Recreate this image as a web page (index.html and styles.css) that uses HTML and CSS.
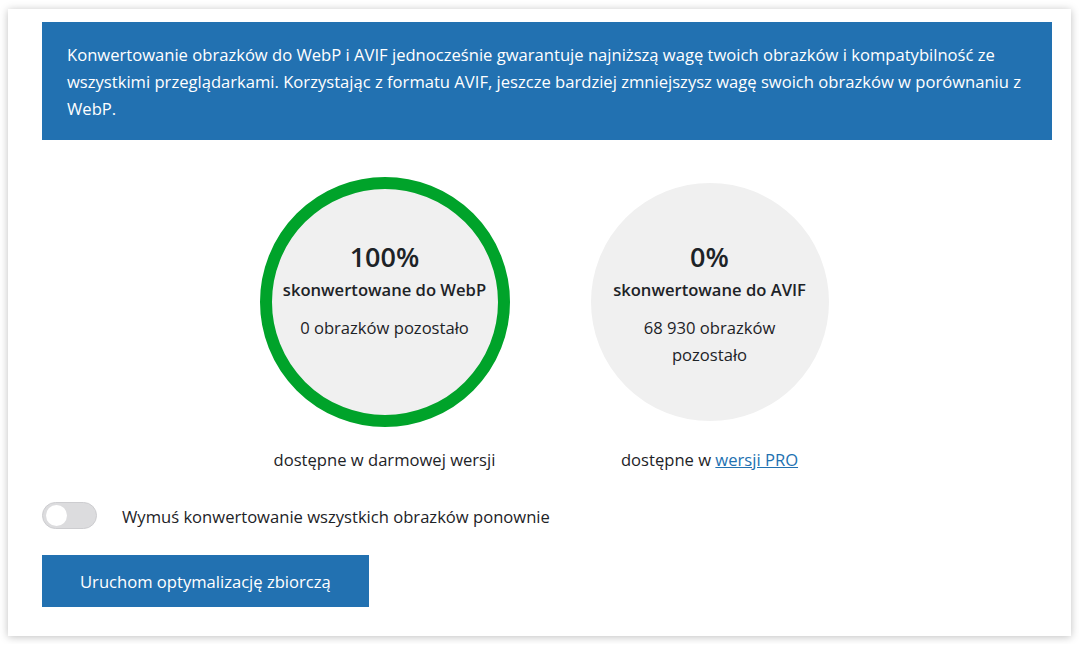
FILE: index.html
```html
<!DOCTYPE html>
<html lang="pl">

<head>
  <meta charset="UTF-8">
  <meta name="viewport" content="width=device-width, initial-scale=1.0">
  <title>Optymalizacja zbiorcza</title>
  <link rel="stylesheet" href="styles.css">
</head>

<body>
  <div class="card">
    <div class="notice">
      Konwertowanie obrazków do WebP i AVIF jednocześnie gwarantuje najniższą wagę twoich obrazków i kompatybilność ze
      wszystkimi przeglądarkami. Korzystając z formatu AVIF, jeszcze bardziej zmniejszysz wagę swoich obrazków w porównaniu z
      WebP.
    </div>

    <div class="stats">
      <div class="stat">
        <div class="stat-circle stat-circle--done">
          <div class="stat-percent">100%</div>
          <div class="stat-title">skonwertowane do WebP</div>
          <div class="stat-remaining">0 obrazków pozostało</div>
        </div>
        <p class="stat-note">dostępne w darmowej wersji</p>
      </div>

      <div class="stat">
        <div class="stat-circle stat-circle--empty">
          <div class="stat-percent">0%</div>
          <div class="stat-title">skonwertowane do AVIF</div>
          <div class="stat-remaining">68 930 obrazków pozostało</div>
        </div>
        <p class="stat-note">dostępne w <a href="#">wersji PRO</a></p>
      </div>
    </div>

    <label class="option">
      <span class="toggle"><span class="toggle-knob"></span></span>
      <span class="option-label">Wymuś konwertowanie wszystkich obrazków ponownie</span>
    </label>

    <button class="btn-primary">Uruchom optymalizację zbiorczą</button>
  </div>
</body>

</html>
```

FILE: styles.css
```css
body {
  margin: 0;
  padding: 9px 8px 8px;
  background-color: #fff;
  font-family: 'Open Sans', sans-serif;
  font-size: 16.6px;
  color: #1d2327;
}

.card {
  background-color: #fff;
  box-shadow: 0 1px 8px rgba(0, 0, 0, 0.25);
  padding: 13px 19px 29px 34px;
}

.notice {
  background-color: #2271b1;
  color: #fff;
  line-height: 27px;
  padding: 19px 18px 18px 25px;
}

.stats {
  display: flex;
  justify-content: center;
  gap: 75px;
  margin-top: 37px;
}

.stat {
  width: 250px;
  text-align: center;
}

.stat-circle {
  box-sizing: border-box;
  width: 250px;
  height: 250px;
  border-radius: 50%;
  background-color: #f0f0f0;
  border: 12px solid #00a32a;
  padding-top: 49px;
}

.stat-circle--empty {
  border: 6px solid #fff;
  padding-top: 55px;
}

.stat-percent {
  font-size: 27px;
  font-weight: 600;
  line-height: 38px;
}

.stat-title {
  font-weight: 600;
  line-height: 27px;
  margin-bottom: 11px;
}

.stat-remaining {
  line-height: 27px;
  max-width: 185px;
  margin: 0 auto;
}

.stat-note {
  line-height: 27px;
  margin: 19px 0 0;
}

.stat-note a {
  color: #2271b1;
}

.option {
  display: flex;
  align-items: center;
  gap: 25px;
  margin-top: 29px;
}

.option-label {
  padding-top: 2px;
}

.toggle {
  position: relative;
  box-sizing: border-box;
  width: 55px;
  height: 27px;
  border-radius: 14px;
  border: 1px solid #cdcdd0;
  background-color: #dcdcde;
}

.toggle-knob {
  position: absolute;
  top: 2px;
  left: 3px;
  width: 21px;
  height: 21px;
  border-radius: 50%;
  background-color: #fff;
}

.btn-primary {
  display: block;
  margin-top: 26px;
  height: 52px;
  padding: 0 38px;
  border: 0;
  background-color: #2271b1;
  color: #fff;
  font-family: 'Open Sans', sans-serif;
  font-size: 16.6px;
  cursor: pointer;
}
```
